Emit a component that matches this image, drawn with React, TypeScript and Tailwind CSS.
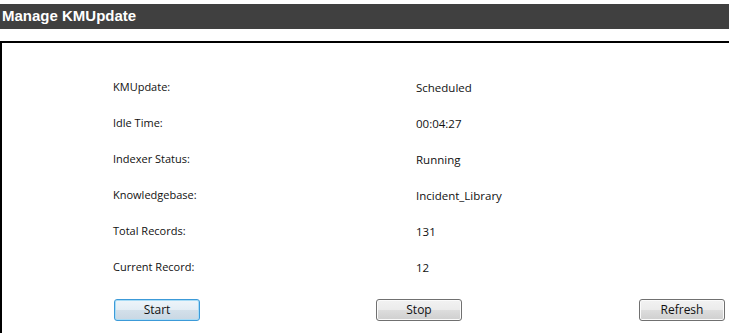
import React from "react";

const rows: { label: string; value: string }[] = [
  { label: "KMUpdate:", value: "Scheduled" },
  { label: "Idle Time:", value: "00:04:27" },
  { label: "Indexer Status:", value: "Running" },
  { label: "Knowledgebase:", value: "Incident_Library" },
  { label: "Total Records:", value: "131" },
  { label: "Current Record:", value: "12" },
];

const Button = ({ label, focused }: { label: string; focused?: boolean }) => (
  <button
    className={
      focused
        ? "w-[86px] h-[22px] rounded-[3px] border border-[#3c9ad8] shadow-[inset_0_0_0_1px_#a8dcf6] bg-[linear-gradient(#eef5fa,#e3edf5_50%,#d3e0ea_50%,#c9d7e3)] text-[12px] text-[#111] leading-none"
        : "w-[86px] h-[22px] rounded-[3px] border border-[#707070] shadow-[inset_0_0_0_1px_#fbfbfb] bg-[linear-gradient(#f2f2f2,#ebebeb_50%,#dddddd_50%,#cfcfcf)] text-[12px] text-[#111] leading-none"
    }
  >
    {label}
  </button>
);

export default function App() {
  return (
    <div className="w-[729px] h-[333px] overflow-hidden bg-white font-['Open_Sans',sans-serif]">
      {/* Title bar */}
      <div className="mt-[4px] h-[25px] bg-[#404040] flex items-center pl-[2px]">
        <span className="text-white text-[15px] font-bold font-['Liberation_Sans',sans-serif]">
          Manage KMUpdate
        </span>
      </div>

      {/* Panel */}
      <div className="mt-[12px] w-[760px] h-[400px] border-t-2 border-l-2 border-black pl-[111px] pt-[26px]">
        {rows.map((r) => (
          <div key={r.label} className="flex h-[36px] items-center text-[#111]">
            <span className="w-[303px] text-[11px]">{r.label}</span>
            <span className="text-[11.5px] pt-[2px]">{r.value}</span>
          </div>
        ))}

        <div className="mt-[11px] flex">
          <div className="ml-[1px]">
            <Button label="Start" focused />
          </div>
          <div className="ml-[176px]">
            <Button label="Stop" />
          </div>
          <div className="ml-[177px]">
            <Button label="Refresh" />
          </div>
        </div>
      </div>
    </div>
  );
}
